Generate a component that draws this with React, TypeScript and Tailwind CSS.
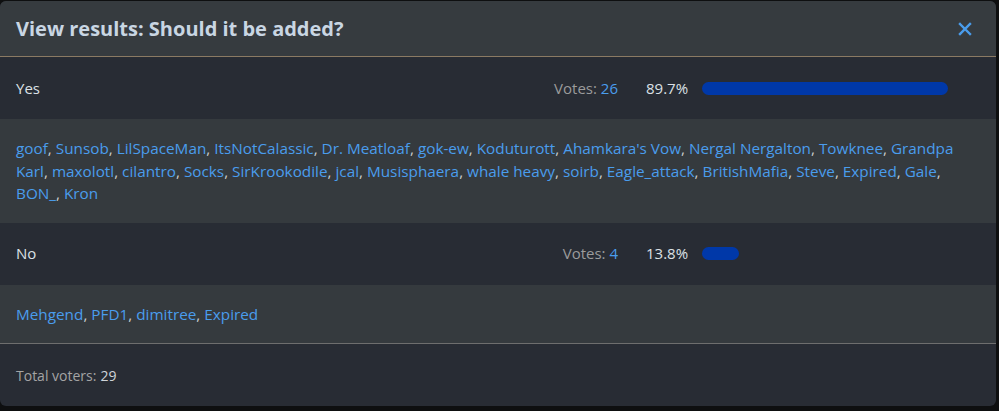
import React from "react";

const yesVoters = [
  "goof", "Sunsob", "LilSpaceMan", "ItsNotCalassic", "Dr. Meatloaf", "gok-ew", "Koduturott",
  "Ahamkara's Vow", "Nergal Nergalton", "Towknee", "Grandpa Karl", "maxolotl", "cilantro", "Socks",
  "SirKrookodile", "jcal", "Musisphaera", "whale heavy", "soirb", "Eagle_attack", "BritishMafia",
  "Steve", "Expired", "Gale", "BON_", "Kron",
];

const noVoters = ["Mehgend", "PFD1", "dimitree", "Expired"];

function VoterList({ names }: { names: string[] }) {
  return (
    <div className="bg-[#353a3e] px-4 py-[18px] text-[15.3px] leading-[22.5px] text-[#c8ccd0]">
      {names.map((n, i) => (
        <React.Fragment key={i}>
          <a className="text-[#4a9ded]">{n}</a>
          {i < names.length - 1 ? ", " : ""}
        </React.Fragment>
      ))}
    </div>
  );
}

function OptionRow({ label, votes, pct, width }: { label: string; votes: number; pct: string; width: number }) {
  return (
    <div className="flex h-[62px] items-center bg-[#282c34] pl-4 pr-12 text-[15px]">
      <span className="flex-1 text-[#dce1e6]">{label}</span>
      <span className="text-[#9b9b9b]">
        Votes: <span className="text-[#4a9ded]">{votes}</span>
      </span>
      <span className="ml-[28px] w-[42px] text-[#dce1e6]">{pct}</span>
      <div className="ml-[14px] w-[246px]">
        <div className="h-[13px] rounded-full bg-[#0038a8]" style={{ width: `${width}px` }} />
      </div>
    </div>
  );
}

export default function App() {
  return (
    <div className="min-h-[411px] bg-[#0e0f10] pt-px" style={{ fontFamily: "'Open Sans', 'Noto Sans', sans-serif" }}>
      <div className="w-[996px] overflow-hidden rounded-md bg-[#282c34]">
        <div className="flex h-[56px] items-center justify-between border-b border-[#8b7a63] bg-[#363b3f] pl-4 pr-6">
          <h2 className="text-[20px] font-bold text-[#c9d6e3]">View results: Should it be added?</h2>
          <svg width="14" height="14" viewBox="0 0 14 14" className="text-[#4a9ded]">
            <path d="M2 2L12 12M12 2L2 12" stroke="currentColor" strokeWidth="2.4" strokeLinecap="square" />
          </svg>
        </div>
        <OptionRow label="Yes" votes={26} pct="89.7%" width={246} />
        <VoterList names={yesVoters} />
        <OptionRow label="No" votes={4} pct="13.8%" width={37} />
        <VoterList names={noVoters} />
        <div className="flex h-[63px] items-center border-t border-[#6e6e6e] px-4 text-[14px] text-[#a4a4a4]">
          Total voters: <span className="ml-1 text-[#cfd4d9]">29</span>
        </div>
      </div>
    </div>
  );
}
